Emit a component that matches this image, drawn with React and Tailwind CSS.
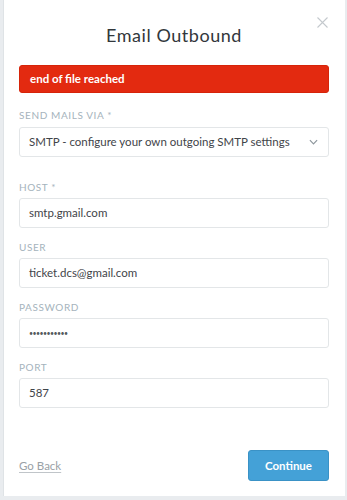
import React from "react";

function Field({ label, value, className = "" }) {
  return (
    <div className={`shrink-0 ${className}`}>
      <div className="text-[10px] leading-[14px] tracking-[0.06em] uppercase text-[#a5b3bc]">{label}</div>
      <div className="mt-[4px] h-[30px] rounded-[3px] border border-[#e3e6e8] bg-white flex items-center px-[9px] text-[11.5px] leading-[14px] text-[#3f4449]">
        {value}
      </div>
    </div>
  );
}

export default function App() {
  return (
    <div className="w-[347px] h-[500px] bg-[#e9ecef] overflow-hidden" style={{ fontFamily: 'Lato, "Noto Sans", sans-serif' }}>
      <div className="ml-[3px] w-[342px] h-[496px] bg-white border-l border-[#dfe3e6] relative flex flex-col pl-[15px] pr-[16px]">
        <button className="absolute right-[17px] top-[17px] w-[11px] h-[11px] text-[#c4c9cd]">
          <svg viewBox="0 0 11 11" width="11" height="11" fill="none" stroke="currentColor" strokeWidth="1.1">
            <path d="M0.5 0.5 L10.5 10.5 M10.5 0.5 L0.5 10.5" />
          </svg>
        </button>
        <h1 className="shrink-0 mt-[23px] text-center text-[18px] leading-[24px] text-[#32373b] tracking-[0.03em]">Email Outbound</h1>
        <div className="shrink-0 mt-[18px] h-[28px] rounded-[3px] bg-[#e32a10] border border-[#d62409] flex items-center px-[10px] text-[11.5px] leading-[14px] font-bold text-white">
          end of file reached
        </div>
        <div className="shrink-0 mt-[15px]">
          <div className="text-[10px] leading-[14px] tracking-[0.06em] uppercase text-[#a5b3bc]">Send mails via *</div>
          <div className="mt-[5px] h-[30px] rounded-[3px] border border-[#e3e6e8] bg-white flex items-center justify-between pl-[9px] pr-[10px] text-[11.5px] leading-[14px] text-[#3f4449]">
            <span className="whitespace-nowrap">SMTP - configure your own outgoing SMTP settings</span>
            <svg viewBox="0 0 10 6" width="9" height="6" fill="none" stroke="#8e979d" strokeWidth="1.3">
              <path d="M1 1 L5 5 L9 1" />
            </svg>
          </div>
        </div>
        <Field className="mt-[23px]" label="Host *" value="smtp.gmail.com" />
        <Field className="mt-[12px]" label="User" value="ticket.dcs@gmail.com" />
        <Field className="mt-[12px]" label="Password" value={<span className="text-[7px] tracking-[-0.08em] text-[#555a5e]">•••••••••••</span>} />
        <Field className="mt-[12px]" label="Port" value="587" />
        <div className="shrink-0 mt-[42px] flex items-center justify-between">
          <a className="text-[11.5px] leading-[14px] text-[#9aa1a6] underline underline-offset-2 decoration-[#c0c5c9]">Go Back</a>
          <button className="w-[81px] h-[31px] rounded-[3px] bg-[#44a1d7] border border-[#3a92c6] text-white text-[11.5px] font-bold">Continue</button>
        </div>
      </div>
    </div>
  );
}
